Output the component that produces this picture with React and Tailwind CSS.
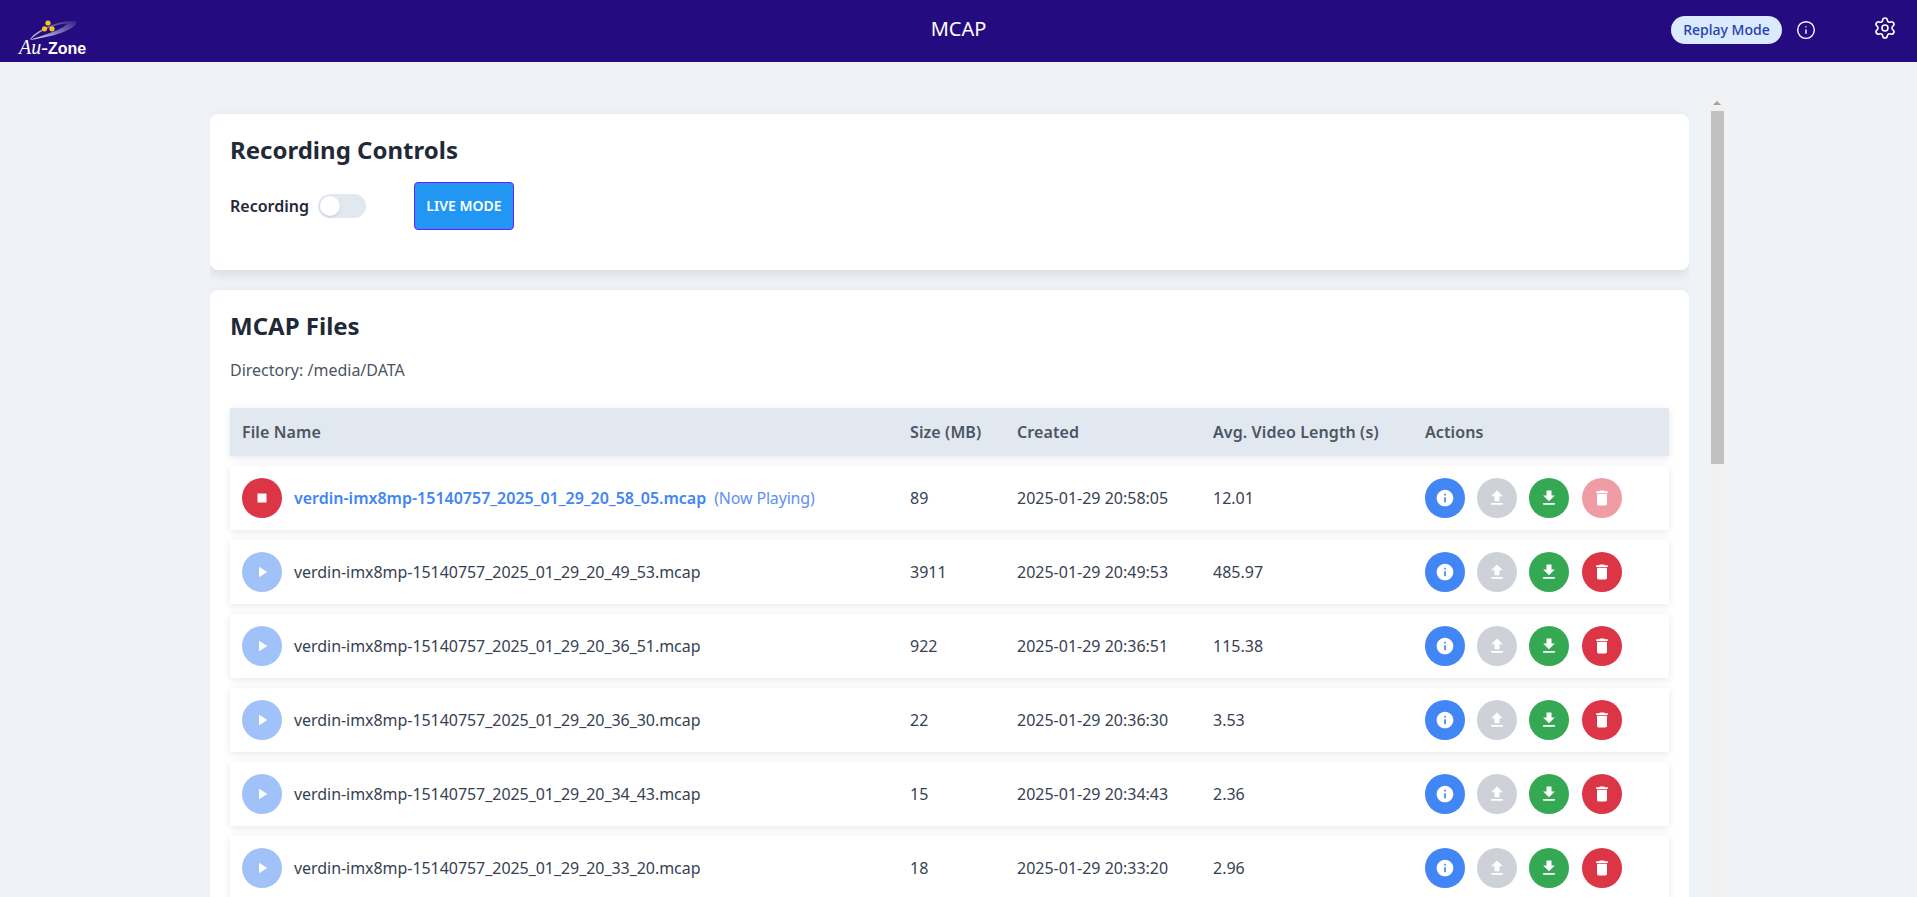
import React from "react";
import { Info, Settings } from "lucide-react";
import { MdInfo, MdFileUpload, MdFileDownload, MdDelete, MdStop, MdPlayArrow } from "react-icons/md";

const files = [
  { name: "verdin-imx8mp-15140757_2025_01_29_20_58_05.mcap", size: "89", created: "2025-01-29 20:58:05", avg: "12.01", playing: true },
  { name: "verdin-imx8mp-15140757_2025_01_29_20_49_53.mcap", size: "3911", created: "2025-01-29 20:49:53", avg: "485.97" },
  { name: "verdin-imx8mp-15140757_2025_01_29_20_36_51.mcap", size: "922", created: "2025-01-29 20:36:51", avg: "115.38" },
  { name: "verdin-imx8mp-15140757_2025_01_29_20_36_30.mcap", size: "22", created: "2025-01-29 20:36:30", avg: "3.53" },
  { name: "verdin-imx8mp-15140757_2025_01_29_20_34_43.mcap", size: "15", created: "2025-01-29 20:34:43", avg: "2.36" },
  { name: "verdin-imx8mp-15140757_2025_01_29_20_33_20.mcap", size: "18", created: "2025-01-29 20:33:20", avg: "2.96" },
];

const cols = "grid grid-cols-[668px_107px_196px_212px_256px] items-center";

function Logo() {
  return (
    <div className="relative w-[72px] h-[38px] ml-[19px] mt-[20px] shrink-0">
      <svg width="72" height="24" viewBox="0 0 72 24" className="absolute left-0 top-0">
        <defs>
          <linearGradient id="swoosh" x1="0" x2="1" y1="1" y2="0">
            <stop offset="0" stopColor="#d9d8ea" />
            <stop offset="0.55" stopColor="#7a72b0" />
            <stop offset="1" stopColor="#33208a" />
          </linearGradient>
        </defs>
        <path d="M11 20C14 12 36 1 54 1C59 1 58 4 54 7C44 14 25 18 11 20C24 15 44 10 48 3.500C36 4 20 11 11 20Z" fill="url(#swoosh)" />
        <circle cx="29" cy="3" r="2.600" fill="#fcc419" />
        <circle cx="25.500" cy="8.800" r="2.600" fill="#fcc419" />
        <circle cx="33" cy="8.800" r="2.600" fill="#fcc419" />
      </svg>
      <div className="absolute left-0 top-[17px] text-white leading-[20px] whitespace-nowrap">
        <span className="font-['Liberation_Serif',serif] italic text-[20px]">Au-</span>
        <span className="font-['Liberation_Sans',sans-serif] font-bold text-[16px]">Zone</span>
      </div>
    </div>
  );
}

function RoundButton({ bg, extra = "", children }) {
  return (
    <button className={`w-10 h-10 rounded-full flex items-center justify-center text-white shrink-0 ${bg} ${extra}`}>
      {children}
    </button>
  );
}

function FileRow({ file }) {
  return (
    <div className={`${cols} h-16 bg-white shadow-[0_2px_8px_rgba(0,0,0,0.09)] text-[#374151]`}>
      <div className="flex items-center pl-3 min-w-0">
        <RoundButton bg={file.playing ? "bg-[#dc3545]" : "bg-[#a0c2f9]"}>
          {file.playing ? <MdStop size={18} /> : <MdPlayArrow size={18} />}
        </RoundButton>
        {file.playing ? (
          <div className="ml-3 whitespace-nowrap">
            <span className="font-semibold text-[#4285f4]">{file.name}</span>
            <span className="ml-2 text-[#5f8ff5] tracking-[-0.18px]">(Now Playing)</span>
          </div>
        ) : (
          <div className="ml-3 whitespace-nowrap tracking-[-0.05px]">{file.name}</div>
        )}
      </div>
      <div className="px-3">{file.size}</div>
      <div className="px-3">{file.created}</div>
      <div className="px-3">{file.avg}</div>
      <div className="pl-3 flex items-center gap-3">
        <RoundButton bg="bg-[#4285f4]"><MdInfo size={20} /></RoundButton>
        <RoundButton bg="bg-[#ced1d7]"><MdFileUpload size={20} /></RoundButton>
        <RoundButton bg="bg-[#34a853]"><MdFileDownload size={20} /></RoundButton>
        <RoundButton bg={file.playing ? "bg-[#ef9ca4]" : "bg-[#dc3545]"} extra="ml-px"><MdDelete size={20} /></RoundButton>
      </div>
    </div>
  );
}

export default function App() {
  return (
    <div className="h-screen flex flex-col overflow-hidden bg-[#eff2f7] font-['Noto_Sans',sans-serif]">
      <header className="h-[62px] shrink-0 bg-[#240c80] flex items-start relative">
        <Logo />
        <div className="absolute left-0 right-0 top-[15px] text-center text-white text-xl">MCAP</div>
        <div className="ml-auto flex items-center mt-4">
          <span className="w-[111px] h-7 rounded-full bg-[#dbeafe] text-[#1e40af] text-sm font-medium flex items-center justify-center">
            Replay Mode
          </span>
          <Info className="ml-[14px] text-white" size={20} strokeWidth={1.7} />
          <Settings className="ml-[57px] mr-5 -mt-1 text-white" size={24} strokeWidth={1.6} />
        </div>
      </header>

      <main className="flex-1 flex min-h-0 pl-[210px] pt-8">
        <div className="w-[1479px] h-full overflow-hidden flex flex-col gap-5 pt-5 shrink-0 pb-5">
          <section className="bg-white rounded-lg shadow-[0_4px_12px_rgba(0,0,0,0.1)] p-5 shrink-0">
            <h2 className="text-2xl font-bold text-[#1f2937] mb-4">Recording Controls</h2>
            <div className="flex items-center mb-5">
              <span className="font-semibold text-[#1f2937]">Recording</span>
              <span className="ml-[9px] w-12 h-6 rounded-full bg-[#e2e8f0] relative">
                <span className="absolute left-[2px] top-[2px] w-5 h-5 rounded-full bg-white shadow" />
              </span>
              <button className="ml-12 w-[100px] h-12 rounded bg-[#2196f3] border border-[#6a1bff] text-white text-sm font-semibold">
                LIVE MODE
              </button>
            </div>
          </section>

          <section className="bg-white rounded-lg shadow-[0_4px_12px_rgba(0,0,0,0.1)] p-5 shrink-0">
            <h2 className="text-2xl font-bold text-[#1f2937] mb-4">MCAP Files</h2>
            <p className="text-[#4b5563] mb-[26px]">Directory: /media/DATA</p>
            <div className={`${cols} h-12 bg-[#e2e8f0] shadow-[0_2px_8px_rgba(0,0,0,0.09)] font-semibold text-[#4b5563] tracking-[0.1px]`}>
              <div className="px-3">File Name</div>
              <div className="px-3">Size (MB)</div>
              <div className="px-3">Created</div>
              <div className="px-3">Avg. Video Length (s)</div>
              <div className="px-3">Actions</div>
            </div>
            <div className="flex flex-col gap-[10px] mt-[10px]">
              {files.map((f) => (
                <FileRow key={f.name} file={f} />
              ))}
            </div>
          </section>
        </div>

        <div className="ml-5 w-4 bg-[#f1f1f1] flex flex-col items-center shrink-0">
          <div className="h-[17px] flex items-center justify-center">
            <span className="w-0 h-0 border-x-[4px] border-x-transparent border-b-[4px] border-b-[#a3a3a3]" />
          </div>
          <div className="w-[13px] h-[353px] bg-[#c1c1c1]" />
        </div>
      </main>
    </div>
  );
}
